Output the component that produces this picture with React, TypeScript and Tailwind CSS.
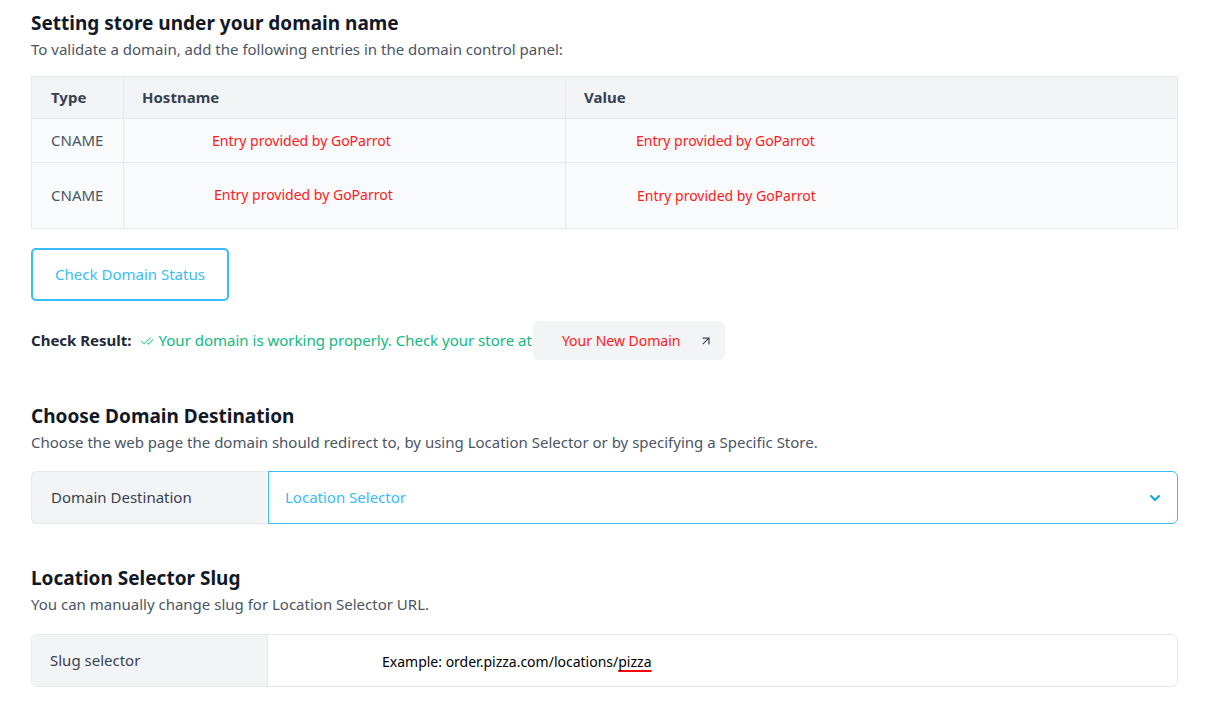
import { CheckCheck, ChevronDown, ArrowUpRight } from "lucide-react";

const font = { fontFamily: '"Noto Sans", "Open Sans", sans-serif' };

function SectionTitle({ title, subtitle }: { title: string; subtitle: string }) {
  return (
    <div>
      <h2 className="text-[19px] font-bold leading-[26px] text-[#111827]">{title}</h2>
      <p className="mt-[2px] text-[15px] leading-[22px] text-[#4b5563]">{subtitle}</p>
    </div>
  );
}

const rows = [
  { type: "CNAME", h: "h-[44px]", hostPad: "pl-[88px]", valPad: "pl-[70px]", offset: "" },
  { type: "CNAME", h: "h-[66px]", hostPad: "pl-[90px]", valPad: "pl-[71px]", offset: "-mt-[3px]" },
];

export default function App() {
  return (
    <div style={font} className="min-h-screen bg-white pl-[31px] pr-[33px] pt-[10px] text-[#374151]">
      <SectionTitle
        title="Setting store under your domain name"
        subtitle="To validate a domain, add the following entries in the domain control panel:"
      />

      <div className="mt-[16px] border border-[#e5e7eb]">
        <div className="flex h-[41px] items-center bg-[#f3f4f6] text-[15px] font-bold text-[#374151]">
          <div className="flex h-full w-[92px] items-center border-r border-[#e5e7eb] pl-[19px]">Type</div>
          <div className="flex h-full w-[442px] items-center border-r border-[#e5e7eb] pl-[18px]">Hostname</div>
          <div className="flex h-full flex-1 items-center pl-[18px]">Value</div>
        </div>
        {rows.map((r, i) => (
          <div key={i} className={`flex ${r.h} items-stretch border-t border-[#e5e7eb] bg-[#f9fafb] text-[15px]`}>
            <div className="flex w-[92px] items-center border-r border-[#e5e7eb] pl-[19px] text-[#4b5563]">{r.type}</div>
            <div className={`flex w-[442px] items-center border-r border-[#e5e7eb] ${r.hostPad}`}>
              <span className={`text-[14px] text-[#ff1a1a] ${r.offset}`}>Entry provided by GoParrot</span>
            </div>
            <div className={`flex flex-1 items-center ${r.valPad}`}>
              <span className="text-[14px] text-[#ff1a1a]">Entry provided by GoParrot</span>
            </div>
          </div>
        ))}
      </div>

      <button className="mt-[19px] flex h-[53px] w-[198px] items-center justify-center rounded-[5px] border-2 border-[#38bdf8] text-[15px] text-[#38bdf8]">
        Check Domain Status
      </button>

      <div className="mt-[20px] flex items-center text-[15px]">
        <span className="font-bold text-[#1f2937]">Check Result:</span>
        <CheckCheck className="ml-[8px] mr-[5px] size-[14px] text-[#34d399]" strokeWidth={1.75} />
        <span className="text-[#10b981]">Your domain is working properly. Check your store at</span>
        <div className="ml-[1px] flex h-[39px] w-[192px] items-center justify-between rounded-[6px] bg-[#f3f4f6] pl-[29px] pr-[12px]">
          <span className="text-[14px] text-[#ff1a1a]">Your New Domain</span>
          <ArrowUpRight className="size-[14px] text-[#374151]" strokeWidth={2} />
        </div>
      </div>

      <div className="mt-[43px]">
        <SectionTitle
          title="Choose Domain Destination"
          subtitle="Choose the web page the domain should redirect to, by using Location Selector or by specifying a Specific Store."
        />
      </div>

      <div className="mt-[18px] flex h-[53px]">
        <div className="flex w-[237px] items-center rounded-l-[6px] border border-r-0 border-[#e5e7eb] bg-[#f3f4f6] pl-[19px] text-[15px] text-[#374151]">
          Domain Destination
        </div>
        <div className="flex flex-1 items-center justify-between rounded-r-[6px] border border-[#38bdf8] pl-[16px] pr-[14px]">
          <span className="text-[15px] text-[#38bdf8]">Location Selector</span>
          <ChevronDown className="size-[16px] text-[#0ea5e9]" strokeWidth={3} />
        </div>
      </div>

      <div className="mt-[41px]">
        <SectionTitle
          title="Location Selector Slug"
          subtitle="You can manually change slug for Location Selector URL."
        />
      </div>

      <div className="mt-[19px] flex h-[53px] rounded-[6px] border border-[#e5e7eb]">
        <div className="flex w-[236px] items-center rounded-l-[6px] border-r border-[#e5e7eb] bg-[#f3f4f6] pl-[18px] text-[15px] text-[#374151]">
          Slug selector
        </div>
        <div className="flex flex-1 items-center pl-[114px] pt-[2px] text-[14px] text-black">
          Example: order.pizza.com/locations/
          <span className="underline decoration-[#ff0000] decoration-2 underline-offset-[3px]">pizza</span>
        </div>
      </div>
    </div>
  );
}
